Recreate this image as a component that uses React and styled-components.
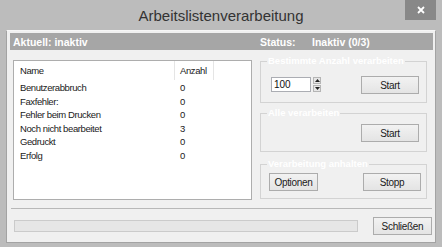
import React from "react";
import styled, { createGlobalStyle } from "styled-components";

const GlobalStyle = createGlobalStyle`
  html, body { margin: 0; padding: 0; background: #bcbcbc; }
  body { font-family: "Liberation Sans", Arial, sans-serif; }
  * { box-sizing: border-box; }
`;

const Window = styled.div`
  width: 442px;
  height: 247px;
  background: #bcbcbc;
  display: flex;
  flex-direction: column;
  overflow: hidden;
`;

const TitleBar = styled.div`
  height: 30px;
  flex: 0 0 30px;
  display: grid;
  grid-template-columns: 1fr auto 1fr;
`;

const Title = styled.div`
  grid-column: 2;
  font-size: 15px;
  line-height: 30px;
  padding-top: 1px;
  color: #333;
  white-space: nowrap;
`;

const CloseButton = styled.div`
  grid-column: 3;
  justify-self: end;
  align-self: start;
  width: 31px;
  height: 20px;
  margin-right: 6px;
  background: #888888;
  display: flex;
  align-items: center;
  justify-content: center;
`;

const Client = styled.div`
  flex: 1;
  margin: 0 6px 4px 6px;
  border-left: 1px solid #a3a3a3;
  border-right: 1px solid #a3a3a3;
  border-bottom: 1px solid #a3a3a3;
  border-top: 1px solid #f6f6f6;
  background: #f0f0f0;
  padding: 2px 2px 0 3px;
  display: flex;
  flex-direction: column;
`;

const StatusBar = styled.div`
  height: 17px;
  background: #a6a6a6;
  color: #fff;
  font-weight: bold;
  font-size: 10.5px;
  display: flex;
  align-items: center;
  padding-left: 3px;
  white-space: nowrap;
`;

const StatusCell = styled.span`
  flex: 0 0 ${(p) => p.$w || "auto"};
`;

const Body = styled.div`
  display: flex;
  margin-top: 10px;
  padding-left: 3px;
`;

const ListBox = styled.div`
  width: 239px;
  height: 140px;
  border: 1px solid #adadad;
  background: #fff;
  font-size: 9.5px;
  letter-spacing: -0.4px;
  color: #1a1a1a;
`;

const ListRow = styled.div`
  display: grid;
  grid-template-columns: 161px 39px 1fr;
  height: ${(p) => (p.$header ? "19px" : "13.5px")};
  line-height: ${(p) => (p.$header ? "19px" : "13.5px")};
`;

const Cell = styled.div`
  padding-left: ${(p) => p.$pl || "5px"};
  white-space: nowrap;
  border-right: ${(p) => (p.$header ? "1px solid #e5e5e5" : "none")};
`;

const Rows = styled.div`
  margin-top: 1px;
`;

const RightColumn = styled.div`
  margin-left: 8px;
  width: 167px;
  display: flex;
  flex-direction: column;
`;

const Group = styled.div`
  position: relative;
  border: 1px solid #d3d3d3;
  height: ${(p) => p.$h};
  margin-top: ${(p) => p.$mt};
  padding: ${(p) => p.$pad};
  display: flex;
  align-items: flex-start;
  justify-content: ${(p) => p.$justify || "space-between"};
`;

const Legend = styled.span`
  position: absolute;
  top: -7px;
  left: 6px;
  padding: 0 1px;
  background: #f0f0f0;
  color: #fff;
  font-weight: bold;
  font-size: 9.5px;
  line-height: 12px;
  white-space: nowrap;
`;

const Button = styled.div`
  width: ${(p) => p.$w};
  height: 18px;
  border: 1px solid #acacac;
  background: linear-gradient(#f2f2f2, #e4e4e4);
  color: #1a1a1a;
  font-size: 10px;
  letter-spacing: -0.3px;
  display: flex;
  align-items: center;
  justify-content: center;
  margin-top: ${(p) => p.$mt || "0"};
`;

const Spinner = styled.div`
  display: flex;
  align-items: center;
  gap: 2px;
  margin-top: 1px;
`;

const NumberBox = styled.div`
  width: 40px;
  height: 15px;
  border: 1px solid #abadb3;
  background: #fff;
  font-size: 10px;
  line-height: 13px;
  padding-left: 2px;
  color: #111;
`;

const SpinButtons = styled.div`
  display: flex;
  flex-direction: column;
  gap: 1px;
`;

const SpinBtn = styled.div`
  width: 8px;
  height: 7px;
  background: #e6e6e6;
  border: 1px solid #b5b5b5;
  display: flex;
  align-items: center;
  justify-content: center;
`;

const Separator = styled.div`
  height: 1px;
  background: #b8b8b8;
  margin: 8px 1px 0 1px;
`;

const Footer = styled.div`
  display: flex;
  align-items: center;
  margin-top: 8px;
  padding-right: 1px;
`;

const Progress = styled.div`
  width: 344px;
  height: 12px;
  margin-left: 4px;
  background: #e6e6e6;
  border: 1px solid #cbcbcb;
`;

const FooterButton = styled(Button)`
  margin-left: auto;
`;

const Arrow = ({ up }) => (
  <svg width="5" height="3" viewBox="0 0 5 3">
    <polygon points={up ? "0,3 5,3 2.5,0" : "0,0 5,0 2.5,3"} fill="#222" />
  </svg>
);

const rows = [
  ["Benutzerabbruch", "0"],
  ["Faxfehler:", "0"],
  ["Fehler beim Drucken", "0"],
  ["Noch nicht bearbeitet", "3"],
  ["Gedruckt", "0"],
  ["Erfolg", "0"],
];

export default function App() {
  return (
    <>
      <GlobalStyle />
      <Window>
        <TitleBar>
          <Title>Arbeitslistenverarbeitung</Title>
          <CloseButton>
            <svg width="8" height="8" viewBox="0 0 8 8">
              <path d="M1 1 L7 7 M7 1 L1 7" stroke="#fff" strokeWidth="1.8" />
            </svg>
          </CloseButton>
        </TitleBar>
        <Client>
          <StatusBar>
            <StatusCell $w="247px">Aktuell: inaktiv</StatusCell>
            <StatusCell $w="52px">Status:</StatusCell>
            <StatusCell>Inaktiv (0/3)</StatusCell>
          </StatusBar>
          <Body>
            <ListBox>
              <ListRow $header>
                <Cell $header $pl="6px">Name</Cell>
                <Cell $header>Anzahl</Cell>
                <Cell />
              </ListRow>
              <Rows>
                {rows.map(([name, count]) => (
                  <ListRow key={name}>
                    <Cell $pl="6px">{name}</Cell>
                    <Cell>{count}</Cell>
                    <Cell />
                  </ListRow>
                ))}
              </Rows>
            </ListBox>
            <RightColumn>
              <Group $h="42px" $mt="1px" $pad="14px 7px 0 10px">
                <Legend>Bestimmte Anzahl verarbeiten</Legend>
                <Spinner>
                  <NumberBox>100</NumberBox>
                  <SpinButtons>
                    <SpinBtn><Arrow up /></SpinBtn>
                    <SpinBtn><Arrow /></SpinBtn>
                  </SpinButtons>
                </Spinner>
                <Button $w="58px">Start</Button>
              </Group>
              <Group $h="39px" $mt="10px" $pad="10px 7px 0 10px" $justify="flex-end">
                <Legend>Alle verarbeiten</Legend>
                <Button $w="58px">Start</Button>
              </Group>
              <Group $h="35px" $mt="12px" $pad="8px 5px 0 8px">
                <Legend>Verarbeitung anhalten</Legend>
                <Button $w="49px" $mt="0">Optionen</Button>
                <Button $w="58px">Stopp</Button>
              </Group>
            </RightColumn>
          </Body>
          <Separator />
          <Footer>
            <Progress />
            <FooterButton $w="59px">Schließen</FooterButton>
          </Footer>
        </Client>
      </Window>
    </>
  );
}
